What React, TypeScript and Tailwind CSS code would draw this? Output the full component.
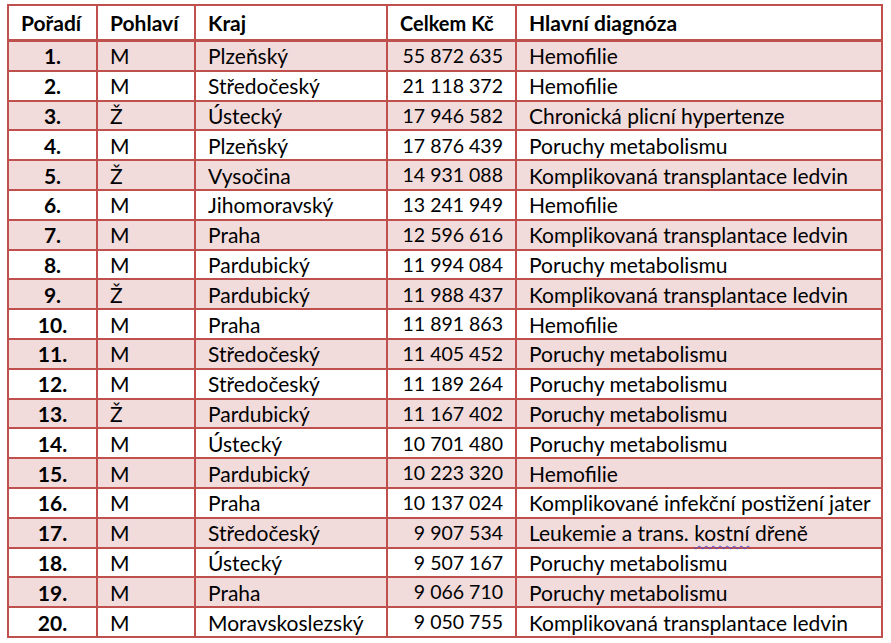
import React from "react";

type Row = [string, string, string, string, React.ReactNode];

const rows: Row[] = [
  ["1.", "M", "Plzeňský", "55 872 635", "Hemofilie"],
  ["2.", "M", "Středočeský", "21 118 372", "Hemofilie"],
  ["3.", "Ž", "Ústecký", "17 946 582", "Chronická plicní hypertenze"],
  ["4.", "M", "Plzeňský", "17 876 439", "Poruchy metabolismu"],
  ["5.", "Ž", "Vysočina", "14 931 088", "Komplikovaná transplantace ledvin"],
  ["6.", "M", "Jihomoravský", "13 241 949", "Hemofilie"],
  ["7.", "M", "Praha", "12 596 616", "Komplikovaná transplantace ledvin"],
  ["8.", "M", "Pardubický", "11 994 084", "Poruchy metabolismu"],
  ["9.", "Ž", "Pardubický", "11 988 437", "Komplikovaná transplantace ledvin"],
  ["10.", "M", "Praha", "11 891 863", "Hemofilie"],
  ["11.", "M", "Středočeský", "11 405 452", "Poruchy metabolismu"],
  ["12.", "M", "Středočeský", "11 189 264", "Poruchy metabolismu"],
  ["13.", "Ž", "Pardubický", "11 167 402", "Poruchy metabolismu"],
  ["14.", "M", "Ústecký", "10 701 480", "Poruchy metabolismu"],
  ["15.", "M", "Pardubický", "10 223 320", "Hemofilie"],
  ["16.", "M", "Praha", "10 137 024", "Komplikované infekční postižení jater"],
  [
    "17.",
    "M",
    "Středočeský",
    "9 907 534",
    <span>
      Leukemie a trans.{" "}
      <span className="underline decoration-wavy decoration-[#4a4ad0] decoration-1 underline-offset-[4px]">kostní</span>{" "}
      dřeně
    </span>,
  ],
  ["18.", "M", "Ústecký", "9 507 167", "Poruchy metabolismu"],
  ["19.", "M", "Praha", "9 066 710", "Poruchy metabolismu"],
  ["20.", "M", "Moravskoslezský", "9 050 755", "Komplikovaná transplantace ledvin"],
];

const cols = "grid grid-cols-[89px_98px_192px_129px_364px]";
const cell = "flex items-center whitespace-nowrap px-3 border-r-2 border-[#c0504d]";

export default function App() {
  return (
    <div className="min-h-[643px] w-[891px] bg-white pl-[7px] pt-[4px] text-black" style={{ fontFamily: "Lato, 'Open Sans', sans-serif" }}>
      <div className="w-[876px] border-x-2 border-t-2 border-[#c0504d] text-[21px] leading-none">
        {/* header */}
        <div className={`${cols} h-[36px] border-b-[3px] border-[#c0504d] font-bold`}>
          <div className={cell}>Pořadí</div>
          <div className={cell}>Pohlaví</div>
          <div className={cell}>Kraj</div>
          <div className={`${cell} text-[20px]`}>Celkem Kč</div>
          <div className="flex items-center px-3">Hlavní diagnóza</div>
        </div>
        {rows.map((r, i) => (
          <div
            key={r[0]}
            className={`${cols} h-[29.8px] border-b-2 border-[#c0504d] ${i % 2 === 0 ? "bg-[#f2dbdb]" : "bg-white"}`}
          >
            <div className={`${cell} justify-center font-bold`}>{r[0]}</div>
            <div className={cell}>{r[1]}</div>
            <div className={cell}>{r[2]}</div>
            <div className="flex items-center justify-end whitespace-nowrap pl-1 pr-[12px] border-r-2 border-[#c0504d] text-[19.5px]">{r[3]}</div>
            <div className="flex items-center px-3 whitespace-nowrap">{r[4]}</div>
          </div>
        ))}
      </div>
    </div>
  );
}
